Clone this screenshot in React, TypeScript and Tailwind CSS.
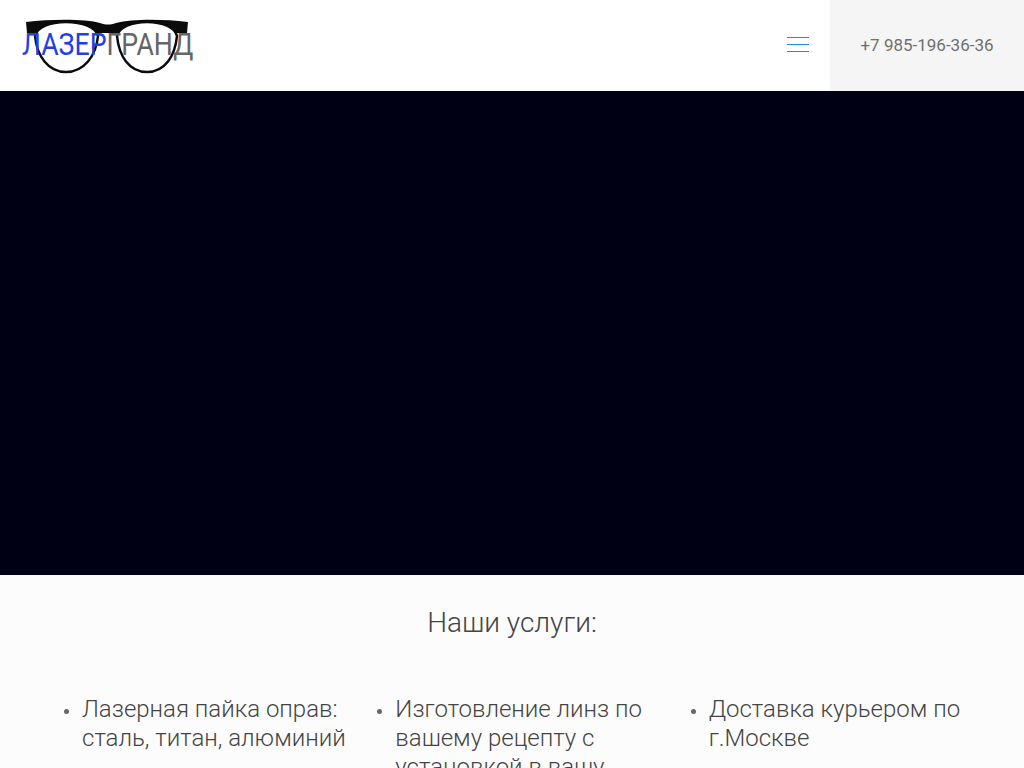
const services = [
  "Лазерная пайка оправ: сталь, титан, алюминий",
  "Изготовление линз по вашему рецепту с установкой в вашу оправу",
  "Доставка курьером по г.Москве",
];

function Logo() {
  return (
    <div className="relative w-[172px] h-[58px]">
      <svg width="172" height="58" viewBox="0 0 172 58" className="absolute left-0 top-0">
        <path d="M4 4 C30 1 64 1 78 5 C84 7 88 7 94 5 C110 1 140 1 166 4 L165 15 L5 15 Z" fill="#0b0b0b" />
        <path d="M13 18 C15 9 28 4 44 4 C60 4 74 9 76 18 C74 38 62 54 44 54 C26 54 15 38 13 18 Z" fill="#fff" stroke="#0b0b0b" strokeWidth="2.5" />
        <path d="M95 18 C97 9 110 4 125 4 C140 4 153 9 155 18 C153 38 143 54 125 54 C107 54 97 38 95 18 Z" fill="#fff" stroke="#0b0b0b" strokeWidth="2.5" />
      </svg>
      <div className="absolute left-0 top-[8px] flex origin-left scale-x-[0.835] text-[32px] leading-[36px] font-['Roboto',sans-serif] whitespace-nowrap">
        <span className="text-[#1f3fe8]">ЛАЗЕР</span>
        <span className="text-[#666666]">ГРАНД</span>
      </div>
    </div>
  );
}

export default function App() {
  return (
    <div className="h-[768px] overflow-hidden bg-[#fcfcfc] font-['Roboto',sans-serif]">
      <header className="h-[91px] bg-white flex items-center justify-between">
        <div className="pl-[22px] pt-[3px]">
          <Logo />
        </div>
        <div className="flex items-center h-full">
          <button className="w-[22px] h-[15px] mr-[21px] mb-[2px] flex flex-col justify-between">
            <span className="h-px bg-[#1b8fd6]" />
            <span className="h-px bg-[#1b8fd6]" />
            <span className="h-px bg-[#1b8fd6]" />
          </button>
          <div className="w-[194px] h-full bg-[#f5f5f5] flex items-center justify-center text-[17px] text-[#6f6f6f]">
            +7 985-196-36-36
          </div>
        </div>
      </header>
      <div className="h-[484px] bg-[#000014]" />
      <section className="pt-[30px]">
        <h2 className="text-center text-[28px] leading-[36px] font-light text-[#444444]">Наши услуги:</h2>
        <div className="grid grid-cols-3 mt-[54px] px-[42px]">
          {services.map((item) => (
            <ul key={item} className="pl-[40px] text-[24px] leading-[29px] font-light text-[#444444]">
              <li className="relative">
                <span className="absolute left-[-18px] top-[14px] w-[5px] h-[5px] rounded-full bg-[#666666]" />
                {item}
              </li>
            </ul>
          ))}
        </div>
      </section>
    </div>
  );
}
